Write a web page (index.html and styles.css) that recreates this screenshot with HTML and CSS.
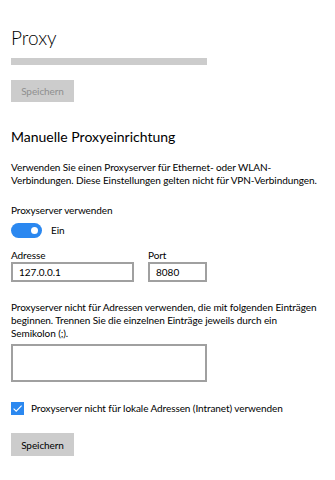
FILE: index.html
```html
<!DOCTYPE html>
<html lang="de">
<head>
<meta charset="utf-8">
<link rel="stylesheet" href="styles.css">
</head>
<body>
<main class="page">
  <h1 class="title">Proxy</h1>
  <div class="progress"></div>
  <button class="btn btn-disabled" disabled>Speichern</button>

  <h2 class="section">Manuelle Proxyeinrichtung</h2>
  <p class="text desc">Verwenden Sie einen Proxyserver für Ethernet- oder WLAN-<br>Verbindungen. Diese Einstellungen gelten nicht für VPN-Verbindungen.</p>

  <div class="text label">Proxyserver verwenden</div>
  <div class="toggle-row">
    <span class="toggle"><span class="knob"></span></span>
    <span class="text">Ein</span>
  </div>

  <div class="fields">
    <label class="field">
      <span class="text field-label">Adresse</span>
      <span class="input input-addr">127.0.0.1</span>
    </label>
    <label class="field">
      <span class="text field-label">Port</span>
      <span class="input input-port">8080</span>
    </label>
  </div>

  <p class="text exceptions">Proxyserver nicht für Adressen verwenden, die mit folgenden Einträgen<br>beginnen. Trennen Sie die einzelnen Einträge jeweils durch ein<br>Semikolon (;).</p>
  <div class="textarea"></div>

  <div class="check-row">
    <span class="checkbox">
      <svg width="13" height="13" viewBox="0 0 13 13"><path d="M2.6 6.6 L5.2 9.2 L10.6 3.6" fill="none" stroke="#fff" stroke-width="1.1"/></svg>
    </span>
    <span class="text">Proxyserver nicht für lokale Adressen (Intranet) verwenden</span>
  </div>

  <button class="btn btn-save">Speichern</button>
</main>
</body>
</html>
```
FILE: styles.css
```css
html, body {
  margin: 0;
  padding: 0;
  background: #fff;
}
body {
  font-family: "Lato", "Open Sans", sans-serif;
  color: #000;
  font-size: 10px;
}
.page {
  padding: 0 0 0 11px;
  width: 324px;
}
.title {
  margin: 0;
  padding-top: 26px;
  font-size: 19px;
  font-weight: 300;
  line-height: 24px;
}
.progress {
  margin-top: 8px;
  width: 196px;
  height: 7px;
  background: #cccccc;
}
.btn {
  display: block;
  border: none;
  padding: 0;
  width: 63px;
  height: 22px;
  font-family: inherit;
  font-size: 10px;
  letter-spacing: -0.08px;
  background: #cccccc;
}
.btn-disabled {
  margin-top: 15px;
  color: #8f8f8f;
}
.section {
  margin: 26px 0 0;
  font-size: 14px;
  font-weight: 400;
  line-height: 18px;
}
.text {
  margin: 0;
  font-size: 10px;
  line-height: 13px;
  letter-spacing: -0.08px;
}
.desc {
  margin-top: 15px;
}
.label {
  margin-top: 17px;
}
.toggle-row {
  margin-top: 6px;
  display: flex;
  align-items: center;
  gap: 9px;
}
.toggle {
  display: flex;
  align-items: center;
  justify-content: flex-end;
  width: 31px;
  height: 15px;
  border-radius: 8px;
  background: #2b88f0;
  box-sizing: border-box;
  padding-right: 4px;
}
.knob {
  width: 7px;
  height: 7px;
  border-radius: 50%;
  background: #fff;
}
.fields {
  margin-top: 11px;
  display: flex;
  gap: 14px;
}
.field {
  display: flex;
  flex-direction: column;
}
.field-label {
  margin-bottom: 0;
}
.input {
  box-sizing: border-box;
  height: 20px;
  border: 2px solid #a0a0a0;
  padding: 0 0 0 6px;
  display: flex;
  align-items: center;
  font-size: 10px;
}
.input-addr { width: 123px; }
.input-port { width: 59px; }
.exceptions {
  margin-top: 19px;
}
.textarea {
  margin-top: 4px;
  box-sizing: border-box;
  width: 196px;
  height: 38px;
  border: 2px solid #a0a0a0;
}
.check-row {
  margin-top: 20px;
  display: flex;
  align-items: center;
  gap: 7px;
}
.checkbox {
  width: 13px;
  height: 13px;
  background: #2b88f0;
  display: block;
}
.checkbox svg { display: block; }
.btn-save {
  margin-top: 18px;
  height: 23px;
  color: #000;
}
```
